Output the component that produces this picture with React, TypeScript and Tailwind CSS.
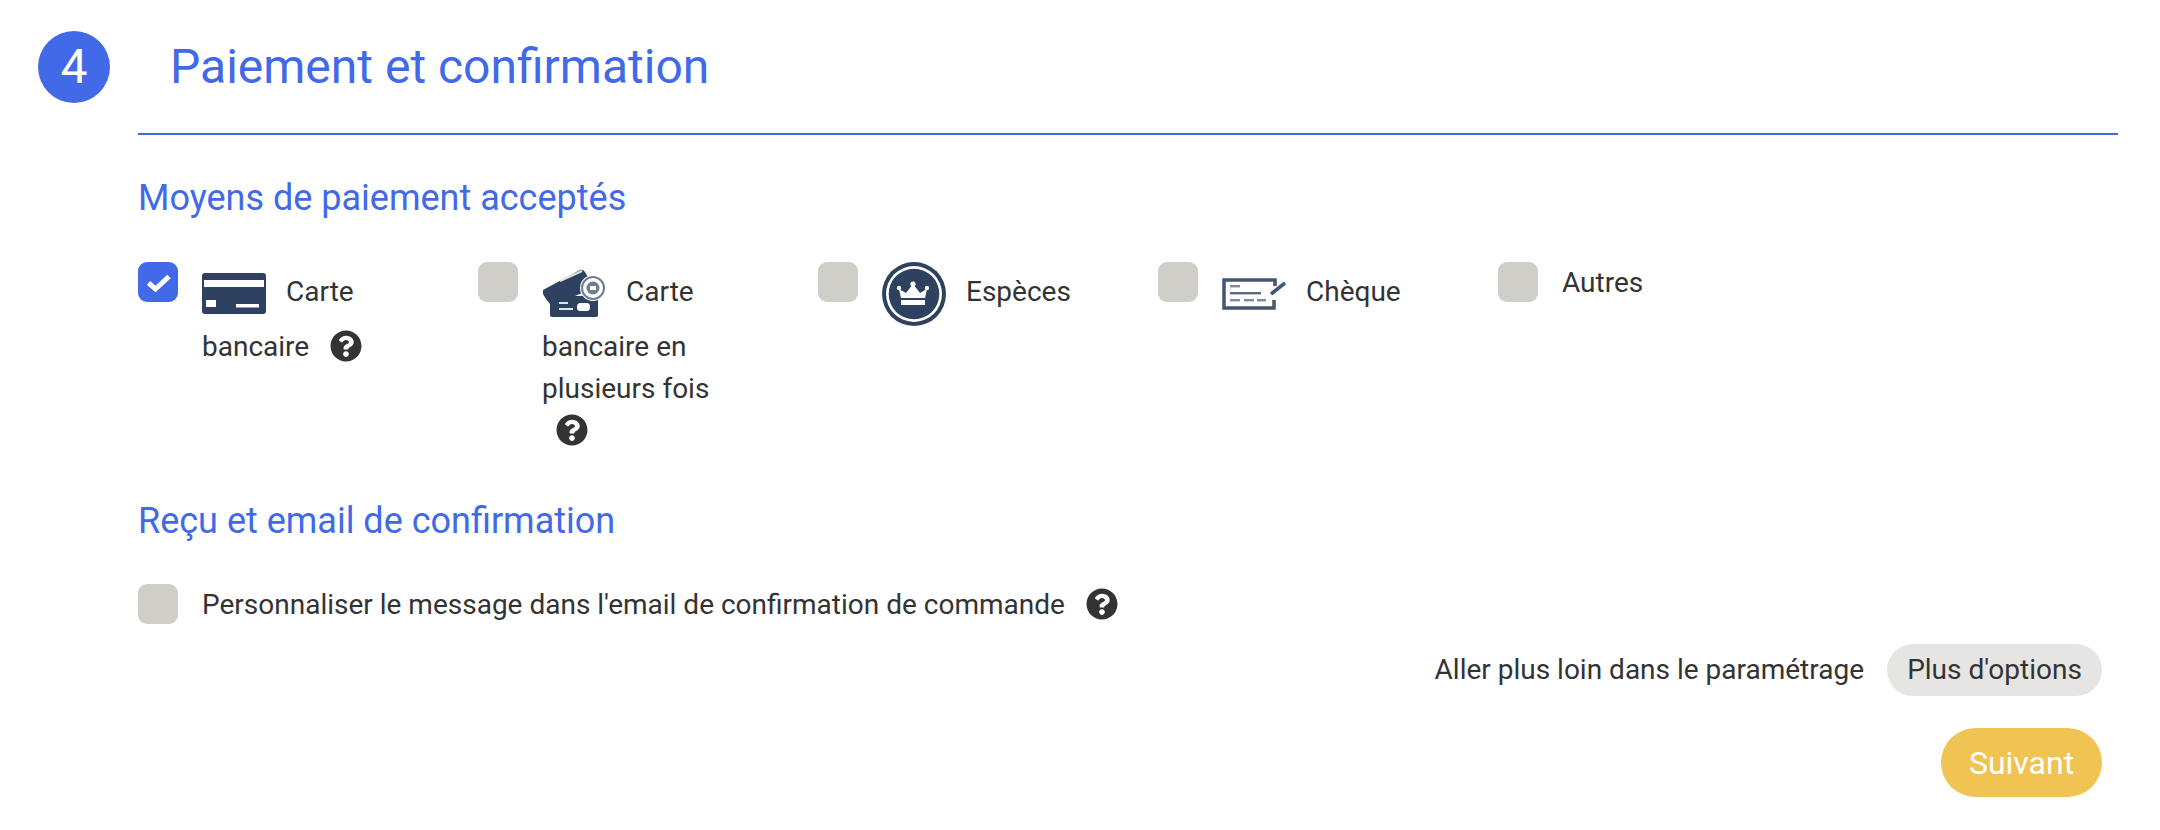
import React from "react";
import { FaQuestionCircle } from "react-icons/fa";

const navy = "#2f4160";

function Box({ checked = false }: { checked?: boolean }) {
  return (
    <span className={`flex h-10 w-10 shrink-0 items-center justify-center rounded-[9px] ${checked ? "bg-[#4169e8]" : "bg-[#cfcec9]"}`}>
      {checked && (
        <svg width="40" height="40" viewBox="0 0 40 40">
          <path d="M10.5 21 L17.5 27 L31 14.5" fill="none" stroke="#fff" strokeWidth="5" />
        </svg>
      )}
    </span>
  );
}

function Help({ className = "" }: { className?: string }) {
  return <FaQuestionCircle size={32} color="#333" className={`inline-block align-[-6px] ${className}`} />;
}

function CardIcon() {
  return (
    <svg width="64" height="64" viewBox="0 0 64 64" className="mr-[20px] inline-block align-middle">
      <rect x="0" y="11" width="64" height="41" rx="3" fill={navy} />
      <rect x="2" y="18" width="60" height="7" fill="#fff" />
      <rect x="4" y="38" width="10" height="7" fill="#fff" />
      <rect x="34" y="42" width="23" height="3.5" fill="#fff" />
    </svg>
  );
}

function CardsIcon() {
  return (
    <svg width="64" height="64" viewBox="0 0 64 64" className="mr-[20px] inline-block align-middle">
      <path d="M1 28 L38 8 Q41 7 43 10 L52 26 L14 42 L8 42 Q3 36 1 32 Z" fill={navy} />
      <path d="M18 19 L40 9" stroke="#dfe3ea" strokeWidth="2" fill="none" />
      <rect x="8" y="34" width="48" height="21" rx="2" fill={navy} />
      <rect x="17" y="40" width="9" height="2" fill="#dfe3ea" />
      <rect x="17" y="46" width="14" height="2" fill="#dfe3ea" />
      <rect x="35" y="41" width="13" height="8" rx="3.5" fill="#fff" />
      <circle cx="51" cy="26" r="13" fill="#fff" />
      <circle cx="51" cy="26" r="11" fill="none" stroke="#6f7d93" strokeWidth="2" />
      <circle cx="51" cy="26" r="6.5" fill="#6f7d93" />
      <rect x="48" y="24" width="6" height="4" fill="#fff" />
    </svg>
  );
}

function CrownIcon() {
  return (
    <svg width="64" height="64" viewBox="0 0 64 64" className="mr-[20px] inline-block align-middle">
      <circle cx="32" cy="32" r="32" fill={navy} />
      <circle cx="32" cy="32" r="28" fill="#fff" />
      <circle cx="32" cy="32" r="25.3" fill={navy} />
      <path d="M17 27 L24 31 L31 22 L38 31 L45 27 L43 36 L19 36 Z" fill="#fff" />
      <circle cx="17" cy="26" r="2.2" fill="#fff" />
      <circle cx="31" cy="22" r="2.6" fill="#fff" />
      <circle cx="45" cy="26" r="2.2" fill="#fff" />
      <rect x="19" y="38" width="24" height="5" fill="#fff" />
    </svg>
  );
}

function ChequeIcon() {
  return (
    <svg width="64" height="64" viewBox="0 0 64 64" className="mr-[20px] inline-block align-middle">
      <path d="M53 24 V18 H2 V46 H52 V38" fill="none" stroke="#45566f" strokeWidth="3.5" />
      <rect x="8" y="23" width="10" height="2.4" fill="#7f8b9d" />
      <rect x="8" y="30" width="31" height="2.4" fill="#5a6a82" />
      <rect x="8" y="37" width="10" height="2.4" fill="#7f8b9d" />
      <rect x="22" y="37" width="10" height="2.4" fill="#7f8b9d" />
      <rect x="35" y="37" width="9" height="2.4" fill="#7f8b9d" />
      <path d="M49 32 L63 21" stroke="#45566f" strokeWidth="3.5" fill="none" />
    </svg>
  );
}

function Item({ checked, children }: { checked?: boolean; children: React.ReactNode }) {
  return (
    <div className="flex w-[340px] shrink-0 gap-6">
      <Box checked={checked} />
      <div className="w-[200px]">{children}</div>
    </div>
  );
}

export default function App() {
  return (
    <div className="h-[830px] w-[2160px] overflow-hidden bg-white font-['Roboto',sans-serif] text-[28px] leading-[42px] text-[#333]">
      <header className="flex items-center pl-[38px] pt-[31px]">
        <div className="flex h-[72px] w-[72px] items-center justify-center rounded-full bg-[#4169e8] text-[48px] text-white">4</div>
        <h1 className="ml-[60px] text-[48px] leading-[72px] text-[#4169e8]">Paiement et confirmation</h1>
      </header>
      <div className="ml-[138px] mt-[30px] w-[1980px] border-t-2 border-[#4169e8]" />
      <main className="pl-[138px]">
        <h2 className="mt-[38px] text-[36px] leading-[50px] text-[#4169e8]">Moyens de paiement acceptés</h2>
        <div className="mt-[39px] flex">
          <Item checked>
            <CardIcon />
            Carte bancaire <Help className="ml-[14px]" />
          </Item>
          <Item>
            <CardsIcon />
            Carte bancaire en plusieurs fois <Help className="ml-[14px]" />
          </Item>
          <Item>
            <CrownIcon />
            Espèces
          </Item>
          <Item>
            <ChequeIcon />
            Chèque
          </Item>
          <Item>Autres</Item>
        </div>
        <h2 className="mt-[44px] text-[36px] leading-[50px] text-[#4169e8]">Reçu et email de confirmation</h2>
        <div className="mt-[38px] flex gap-6">
          <Box />
          <div>
            Personnaliser le message dans l'email de confirmation de commande <Help className="ml-[14px]" />
          </div>
        </div>
      </main>
      <div className="mt-[18px] flex items-center justify-end pr-[58px]">
        <span className="mr-[23px]">Aller plus loin dans le paramétrage</span>
        <button className="h-[52px] w-[215px] rounded-full bg-[#e6e5e3] text-[28px]">Plus d'options</button>
      </div>
      <div className="mt-[32px] flex justify-end pr-[58px]">
        <button className="h-[69px] w-[161px] rounded-full bg-[#efc452] text-[32px] text-white">Suivant</button>
      </div>
    </div>
  );
}
